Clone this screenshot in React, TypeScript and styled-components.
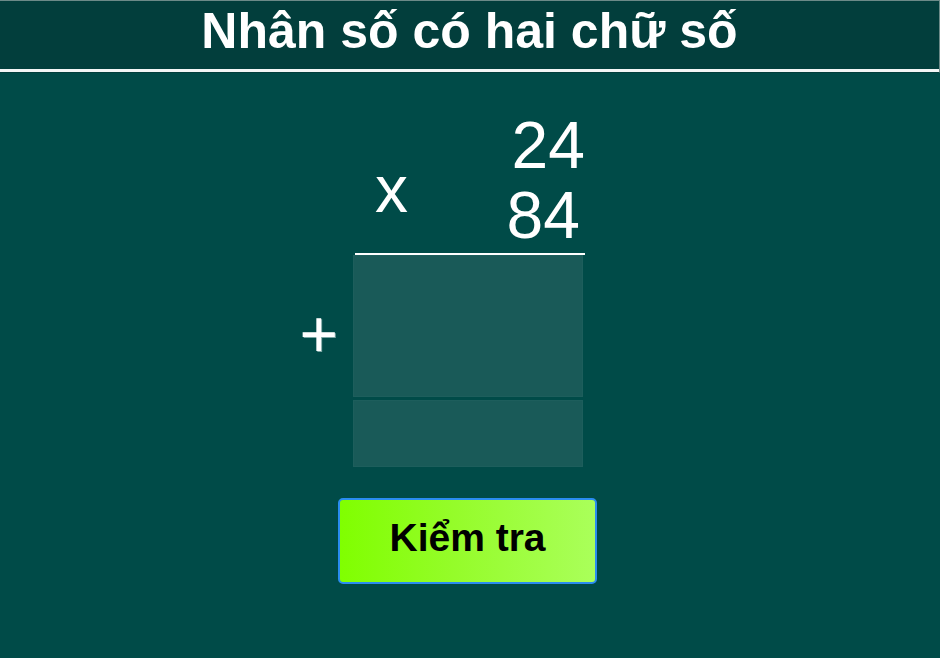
import * as React from 'react'
import styled, { createGlobalStyle } from 'styled-components'

const GlobalStyle = createGlobalStyle`
  html, body {
    margin: 0;
    padding: 0;
    background: #004b48;
  }
  body {
    font-family: "Liberation Sans", Arial, sans-serif;
    color: #ffffff;
  }
`

const Page = styled.div`
  width: 940px;
  height: 658px;
  background: #004b48;
  overflow: hidden;
`

const Header = styled.header`
  box-sizing: border-box;
  height: 73px;
  background: #023e3c;
  border-top: 1px solid #6c8a88;
  border-right: 1px solid #6c8a88;
  border-bottom: 1px solid #023e3c;
  box-shadow: inset 0 -3px 0 #f2f6f6;
  display: flex;
  justify-content: center;
  padding-bottom: 12px;
  align-items: center;
`

const Title = styled.h1`
  margin: 0;
  font-size: 50px;
  font-weight: 700;
  line-height: 56px;
  color: #ffffff;
`

const Board = styled.main`
  display: grid;
  grid-template-columns: 1fr 232px 1fr;
  padding-top: 37px;
  padding-right: 2px;
`

const Operands = styled.div`
  grid-column: 2;
  display: flex;
  flex-direction: column;
  font-size: 66px;
  line-height: 70px;
`

const OperandRow = styled.div<{ $inset?: number }>`
  display: flex;
  justify-content: space-between;
  align-items: flex-start;
  padding-right: ${p => p.$inset ?? 0}px;
`

const Sign = styled.span`
  margin-top: -26px;
  margin-left: 22px;
`

const Digits = styled.span`
  margin-left: auto;
`

const Rule = styled.div`
  grid-column: 2;
  height: 2px;
  margin: 3px 0 0 2px;
  background: #ffffff;
`

const PlusSign = styled.div`
  grid-column: 1;
  justify-self: end;
  align-self: start;
  margin: 46px 15px 0 0;
  font-size: 66px;
  line-height: 66px;
  font-weight: 400;
  text-shadow: 1px 1px 0 #7aa5a3;
`

const Partials = styled.div`
  grid-column: 2;
  display: flex;
  flex-direction: column;
  gap: 3px;
  width: 230px;
`

const AnswerBox = styled.div<{ $h: number }>`
  height: ${p => p.$h}px;
  background: #195a58;
  box-shadow: inset 0 0 0 1px #1d5e5c;
`

const ButtonRow = styled.div`
  grid-column: 1 / 4;
  display: flex;
  justify-content: center;
  padding-top: 31px;
  padding-right: 3px;
`

const CheckButton = styled.button`
  box-sizing: border-box;
  width: 259px;
  height: 86px;
  border: 2px solid #2a8cf0;
  border-radius: 5px;
  background: linear-gradient(90deg, #80ff00 0%, #95fc2a 45%, #aaff5a 100%);
  font-family: "Liberation Sans", Arial, sans-serif;
  font-size: 39px;
  font-weight: 700;
  color: #000000;
  padding: 0 0 6px;
  cursor: pointer;
`

export default function App() {
  return (
    <Page>
      <GlobalStyle />
      <Header>
        <Title>Nhân số có hai chữ số</Title>
      </Header>
      <Board>
        <Operands>
          <OperandRow>
            <Digits>24</Digits>
          </OperandRow>
          <OperandRow $inset={5}>
            <Sign>x</Sign>
            <Digits>84</Digits>
          </OperandRow>
        </Operands>
        <Rule />
        <PlusSign>+</PlusSign>
        <Partials>
          <AnswerBox $h={142} />
          <AnswerBox $h={67} />
        </Partials>
        <ButtonRow>
          <CheckButton>Kiểm tra</CheckButton>
        </ButtonRow>
      </Board>
    </Page>
  )
}
